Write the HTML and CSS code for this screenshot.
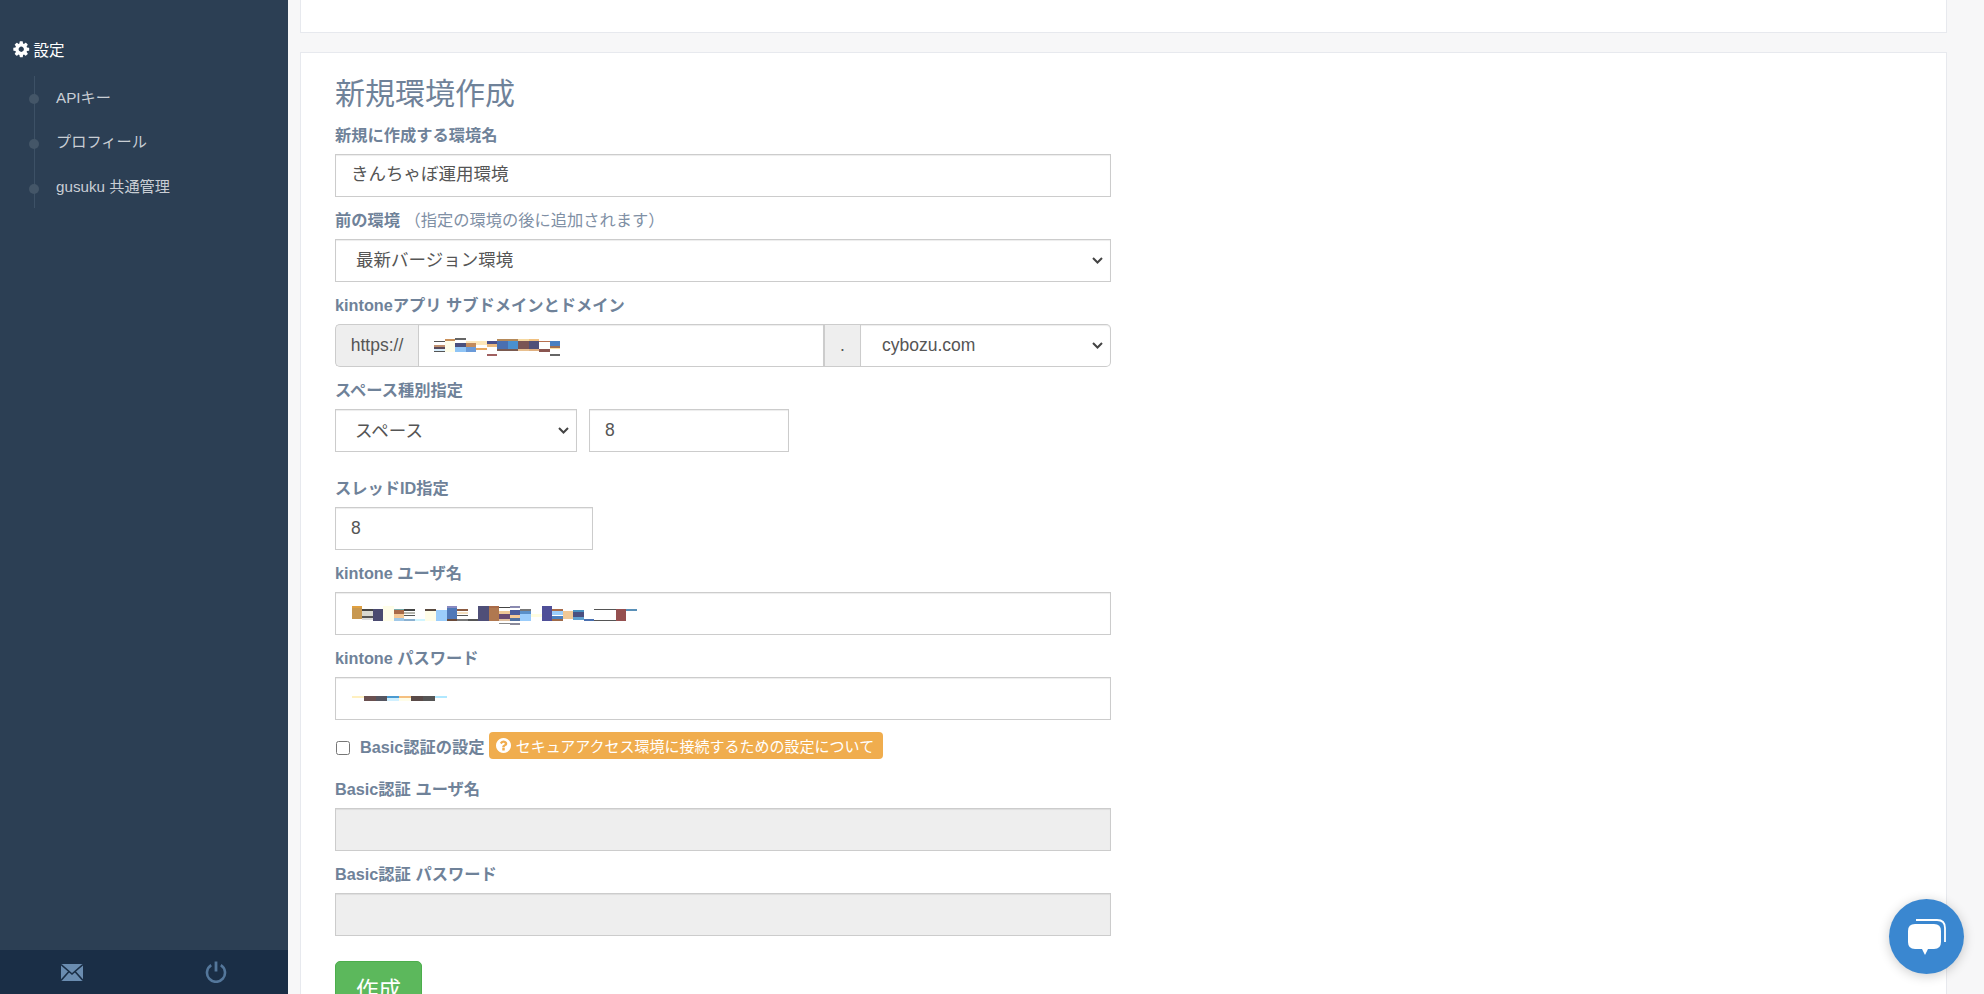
FILE: index.html
```html
<!DOCTYPE html>
<html lang="ja">
<head>
<meta charset="utf-8">
<title>新規環境作成</title>
<link rel="stylesheet" href="styles.css">
</head>
<body>
<aside class="sidebar">
  <nav class="side-nav">
    <div class="side-title">
      <svg class="gear" viewBox="0 0 1792 1792"><path fill="#fff" d="M1152 896q0-106-75-181t-181-75-181 75-75 181 75 181 181 75 181-75 75-181zm512-109v222q0 12-8 23t-20 13l-185 28q-19 54-39 91 35 50 107 138 10 12 10 25t-9 23q-27 37-99 108t-94 71q-12 0-26-9l-138-108q-44 23-91 38-16 136-29 186-7 28-36 28h-222q-14 0-24.500-8.500t-11.500-21.500l-28-184q-49-16-90-37l-141 107q-10 9-25 9-14 0-25-11-126-114-165-168-7-10-7-23 0-12 8-23 15-21 51-66.500t54-70.500q-27-50-41-99l-183-27q-13-2-21-12.500t-8-23.500v-222q0-12 8-23t19-13l186-28q14-46 39-92-40-57-107-138-10-12-10-24 0-10 9-23 26-36 98.500-107.500t94.500-71.500q13 0 26 10l138 107q44-23 91-38 16-136 29-186 7-28 36-28h222q14 0 24.500 8.500t11.500 21.500l28 184q49 16 90 37l142-107q9-9 24-9 13 0 25 10 129 119 165 170 7 8 7 22 0 12-8 23-15 21-51 66.500t-54 70.500q26 50 41 98l183 28q13 2 21 12.500t8 23.500z"/></svg>
      <span>設定</span>
    </div>
    <ul class="side-list">
      <li class="side-item side-item-first">APIキー</li>
      <li class="side-item">プロフィール</li>
      <li class="side-item">gusuku 共通管理</li>
    </ul>
  </nav>
  <div class="side-foot">
    <svg class="mail" viewBox="0 0 22 17"><rect width="22" height="17" fill="#6a8cb0"/><path d="M0 0.500L11 10L22 0.500M0 16.500L8 7.500M22 16.500L14 7.500" fill="none" stroke="#1a2e46" stroke-width="1.600"/></svg>
    <svg class="power" viewBox="0 0 22 22"><path d="M6.200 4.200A9 9 0 1 0 15.800 4.200" fill="none" stroke="#54779b" stroke-width="2.600"/><path d="M11 0.500V10.500" fill="none" stroke="#54779b" stroke-width="2.800"/></svg>
  </div>
</aside>

<main class="main">
  <section class="panel panel-top"></section>
  <section class="panel panel-form">
    <h1 class="title">新規環境作成</h1>

    <div class="group">
      <label class="label">新規に作成する環境名</label>
      <input class="control control-cjk" type="text" value="きんちゃぼ運用環境">
    </div>

    <div class="group">
      <label class="label">前の環境 <span class="hint">（指定の環境の後に追加されます）</span></label>
      <select class="control select"><option>最新バージョン環境</option></select>
    </div>

    <div class="group group-domain">
      <label class="label">kintoneアプリ サブドメインとドメイン</label>
      <div class="input-group">
        <span class="addon addon-first">https://</span>
        <div class="masked masked-sub">
          <input class="control control-flat" type="text">
          <svg class="mosaic mosaic-sub" viewBox="0 0 600 150" shape-rendering="crispEdges">
            <rect x="42" y="48" width="33" height="3" fill="#555"/><rect x="42" y="60" width="33" height="6" fill="#c09070"/><rect x="42" y="66" width="33" height="6" fill="#5b4a5a"/><rect x="42" y="72" width="33" height="6" fill="#d7eefc"/><rect x="42" y="78" width="33" height="3" fill="#555"/>
            <rect x="75" y="42" width="30" height="6" fill="#c9905a"/><rect x="75" y="48" width="30" height="33" fill="#fffde8"/>
            <rect x="105" y="39" width="33" height="6" fill="#666"/><rect x="105" y="54" width="33" height="12" fill="#4a4f7c"/><rect x="105" y="66" width="33" height="15" fill="#8fc4f5"/>
            <rect x="138" y="48" width="30" height="6" fill="#fce6bb"/><rect x="138" y="54" width="30" height="12" fill="#c28a5b"/><rect x="138" y="66" width="30" height="15" fill="#6a9ad8"/>
            <rect x="168" y="48" width="33" height="12" fill="#fde6b8"/><rect x="168" y="69" width="33" height="6" fill="#e8a860"/>
            <rect x="201" y="48" width="30" height="9" fill="#4a4f8c"/><rect x="201" y="57" width="30" height="9" fill="#e8b880"/><rect x="201" y="87" width="30" height="6" fill="#a06060"/>
            <rect x="231" y="42" width="33" height="6" fill="#b58a5a"/><rect x="231" y="48" width="33" height="24" fill="#4a6fb0"/><rect x="231" y="72" width="33" height="6" fill="#7a5a50"/>
            <rect x="264" y="42" width="30" height="6" fill="#b58a5a"/><rect x="264" y="48" width="30" height="24" fill="#4a90d0"/><rect x="264" y="72" width="30" height="6" fill="#7a5a50"/>
            <rect x="294" y="42" width="33" height="6" fill="#f5d8a0"/><rect x="294" y="48" width="33" height="24" fill="#7a5555"/><rect x="294" y="72" width="33" height="6" fill="#e8c090"/>
            <rect x="327" y="42" width="30" height="6" fill="#f0c080"/><rect x="327" y="48" width="30" height="24" fill="#4f5078"/><rect x="327" y="72" width="30" height="6" fill="#e0b080"/>
            <rect x="357" y="48" width="33" height="3" fill="#b87050"/><rect x="357" y="72" width="33" height="9" fill="#8a5550"/>
            <rect x="390" y="48" width="30" height="15" fill="#4a80c0"/><rect x="390" y="63" width="30" height="6" fill="#a07050"/><rect x="390" y="69" width="30" height="3" fill="#ffe0a0"/><rect x="390" y="87" width="30" height="6" fill="#666"/>
          </svg>
        </div>
        <span class="addon addon-dot">.</span>
        <select class="control select select-domain"><option>cybozu.com</option></select>
      </div>
    </div>

    <div class="group group-space">
      <label class="label">スペース種別指定</label>
      <div class="space-row">
        <select class="control select select-space"><option>スペース</option></select>
        <input class="control input-space" type="text" value="8">
      </div>
    </div>

    <div class="group">
      <label class="label">スレッドID指定</label>
      <input class="control input-thread" type="text" value="8">
    </div>

    <div class="group">
      <label class="label">kintone ユーザ名</label>
      <div class="masked">
        <input class="control" type="text">
        <svg class="mosaic mosaic-user" viewBox="0 0 960 150" shape-rendering="crispEdges">
          <rect x="36" y="48" width="30" height="6" fill="#e0a040"/><rect x="36" y="54" width="30" height="33" fill="#c89850"/>
          <rect x="66" y="57" width="33" height="6" fill="#444"/><rect x="66" y="63" width="33" height="15" fill="#d8d8d0"/><rect x="66" y="78" width="33" height="6" fill="#555"/><rect x="66" y="84" width="33" height="6" fill="#ddd"/>
          <rect x="99" y="57" width="30" height="36" fill="#4a4a70"/>
          <rect x="129" y="48" width="33" height="45" fill="#fffde8"/>
          <rect x="162" y="57" width="30" height="3" fill="#7aa"/><rect x="162" y="60" width="30" height="12" fill="#a86a48"/><rect x="162" y="72" width="30" height="12" fill="#f5c896"/><rect x="162" y="84" width="30" height="9" fill="#a0c8e8"/>
          <rect x="192" y="57" width="33" height="6" fill="#444"/><rect x="192" y="66" width="33" height="6" fill="#b8b8b0"/><rect x="192" y="75" width="33" height="3" fill="#555"/><rect x="192" y="87" width="33" height="6" fill="#8ab0d0"/>
          <rect x="225" y="87" width="30" height="6" fill="#d0f5ff"/>
          <rect x="255" y="57" width="33" height="6" fill="#5a4a40"/><rect x="255" y="63" width="33" height="30" fill="#fffde8"/>
          <rect x="288" y="60" width="33" height="33" fill="#9bcdfb"/>
          <rect x="321" y="48" width="30" height="6" fill="#8a8ac0"/><rect x="321" y="54" width="30" height="33" fill="#4f78b8"/><rect x="321" y="87" width="30" height="6" fill="#6a4a3a"/>
          <rect x="351" y="57" width="33" height="6" fill="#8a5a40"/><rect x="351" y="66" width="33" height="6" fill="#f5e0c0"/><rect x="351" y="75" width="33" height="3" fill="#555"/><rect x="351" y="87" width="33" height="6" fill="#777"/>
          <rect x="384" y="87" width="30" height="6" fill="#555"/>
          <rect x="414" y="48" width="33" height="45" fill="#4f4f78"/>
          <rect x="447" y="48" width="30" height="6" fill="#a86a48"/><rect x="447" y="54" width="30" height="39" fill="#b07850"/>
          <rect x="477" y="51" width="33" height="3" fill="#444"/><rect x="477" y="63" width="33" height="9" fill="#f0c896"/><rect x="477" y="72" width="33" height="15" fill="#6a4a70"/><rect x="477" y="87" width="33" height="6" fill="#e0c0a0"/><rect x="477" y="99" width="33" height="3" fill="#888"/>
          <rect x="510" y="48" width="30" height="6" fill="#8a8ab0"/><rect x="510" y="60" width="30" height="15" fill="#4a5a9a"/><rect x="510" y="75" width="30" height="9" fill="#f5c896"/><rect x="510" y="84" width="30" height="9" fill="#5070a0"/><rect x="510" y="99" width="30" height="6" fill="#8a8a9a"/>
          <rect x="540" y="57" width="33" height="6" fill="#777"/><rect x="540" y="63" width="33" height="9" fill="#5a90c8"/><rect x="540" y="72" width="33" height="21" fill="#9bcdfb"/>
          <rect x="573" y="72" width="33" height="9" fill="#fffde0"/>
          <rect x="606" y="48" width="30" height="45" fill="#4f4f98"/>
          <rect x="636" y="57" width="33" height="6" fill="#a86a48"/><rect x="636" y="63" width="33" height="12" fill="#9bcdfb"/><rect x="636" y="78" width="33" height="9" fill="#4a80c0"/><rect x="636" y="87" width="33" height="6" fill="#a06a48"/>
          <rect x="669" y="63" width="30" height="24" fill="#f0c896"/>
          <rect x="699" y="60" width="33" height="6" fill="#4a90c0"/><rect x="699" y="66" width="33" height="15" fill="#4a4f80"/><rect x="699" y="81" width="33" height="9" fill="#60a0d0"/>
          <rect x="732" y="87" width="30" height="6" fill="#4a70b0"/>
          <rect x="762" y="57" width="66" height="3" fill="#555"/><rect x="762" y="90" width="66" height="3" fill="#555"/>
          <rect x="828" y="57" width="30" height="36" fill="#955050"/>
          <rect x="858" y="57" width="33" height="6" fill="#5a90b8"/>
        </svg>
      </div>
    </div>

    <div class="group">
      <label class="label">kintone パスワード</label>
      <div class="masked">
        <input class="control" type="text">
        <svg class="mosaic mosaic-pass" viewBox="0 0 360 30" shape-rendering="crispEdges">
          <rect x="36" y="12" width="36" height="7" fill="#fff0c0"/>
          <rect x="72" y="12" width="36" height="14" fill="#6a5050"/>
          <rect x="108" y="12" width="33" height="14" fill="#555560"/>
          <rect x="141" y="12" width="36" height="7" fill="#4a9ad0"/><rect x="141" y="19" width="36" height="7" fill="#d0f0ff"/>
          <rect x="177" y="12" width="36" height="7" fill="#f5c080"/><rect x="177" y="19" width="36" height="7" fill="#fffde8"/>
          <rect x="213" y="12" width="36" height="14" fill="#5a4a48"/>
          <rect x="249" y="12" width="36" height="14" fill="#555"/>
          <rect x="285" y="12" width="36" height="7" fill="#b0e8ff"/>
        </svg>
      </div>
    </div>

    <div class="check-row">
      <input class="check" type="checkbox">
      <span class="check-label">Basic認証の設定</span>
      <span class="badge">
        <svg class="badge-icon" viewBox="128 128 1536 1536"><path fill="#fff" d="M1024 1376v-192q0-14-9-23t-23-9h-192q-14 0-23 9t-9 23v192q0 14 9 23t23 9h192q14 0 23-9t9-23zm256-672q0-88-55.500-163t-138.500-116-170-41q-243 0-371 213-15 24 8 42l132 100q7 6 19 6 16 0 25-12 53-68 86-92 34-24 86-24 48 0 85.500 26t37.500 59q0 38-20 61t-68 45q-63 28-115.500 86.500t-52.500 125.500v36q0 14 9 23t23 9h192q14 0 23-9t9-23q0-19 21.500-49.500t54.500-49.500q32-18 49-28.500t46-35 44.500-48 28-60.500 12.500-81zm384 192q0 209-103 385.500t-279.500 279.500-385.500 103-385.500-103-279.500-279.500-103-385.500 103-385.500 279.500-279.500 385.500-103 385.500 103 279.500 279.500 103 385.500z"/></svg>
        セキュアアクセス環境に接続するための設定について
      </span>
    </div>

    <div class="group">
      <label class="label">Basic認証 ユーザ名</label>
      <input class="control" type="text" disabled>
    </div>

    <div class="group">
      <label class="label">Basic認証 パスワード</label>
      <input class="control" type="text" disabled>
    </div>

    <button class="submit" type="button">作成</button>
  </section>
</main>

<div class="chat">
  <svg class="chat-icon" viewBox="0 0 38 36">
    <path d="M8 1H29Q37 1 37 9V23" fill="none" stroke="#fff" stroke-width="1.800"/>
    <path d="M7 5H26Q33 5 33 12V23Q33 30 26 30H20L17 36L14 30H7Q0 30 0 23V12Q0 5 7 5Z" fill="#fff"/>
  </svg>
</div>
</body>
</html>
```
FILE: styles.css
```css
* { box-sizing: border-box; }
html, body { margin: 0; height: 994px; overflow: hidden; }
body {
  display: flex;
  background: #f7f7f8;
  font-family: "Liberation Sans", "Noto Sans CJK JP", sans-serif;
  color: #555;
}

/* Sidebar */
.sidebar {
  width: 288px;
  height: 994px;
  flex: none;
  display: flex;
  flex-direction: column;
  background: #2c3f54;
}
.side-nav { flex: 1; padding: 37px 0 0 12px; }
.side-title { display: flex; align-items: center; gap: 3px; height: 24px; color: #fff; font-size: 15.500px; }
.gear { width: 18.500px; height: 18.500px; flex: none; }
.side-list {
  list-style: none;
  margin: 15px 0 0 22px;
  padding: 0;
  height: 132px;
  border-left: 1px solid #3d5166;
}
.side-item {
  position: relative;
  height: 45px;
  padding: 11px 0 0 21px;
  font-size: 15.200px;
  line-height: 20px;
  color: #c9ced4;
}
.side-item-first { padding-top: 12px; }
.side-item::before {
  content: "";
  position: absolute;
  left: -6px;
  top: 18px;
  width: 10px;
  height: 10px;
  border-radius: 50%;
  background: #445668;
}
.side-foot {
  height: 44px;
  flex: none;
  background: #1a2e46;
  display: flex;
  align-items: center;
  padding-left: 61px;
  gap: 122px;
}
.mail { width: 22px; height: 17px; }
.power { width: 22px; height: 22px; }

/* Main */
.main {
  flex: 1;
  height: 994px;
  overflow: hidden;
  padding: 0 37px 0 12px;
}
.panel { background: #fff; border: 1px solid #e7e9ee; }
.panel-top { height: 33px; border-top: 0; margin-bottom: 19px; }
.panel-form { padding: 23px 34px 40px 34px; }
.title {
  margin: 0 0 11px;
  font-size: 30px;
  line-height: 36px;
  font-weight: 400;
  color: #6f8299;
}

/* Form */
.group { margin-bottom: 11.500px; width: 776px; }
.group-domain { margin-bottom: 11px; }
.group-space { margin-bottom: 24px; }
.label {
  display: block;
  height: 24px;
  margin-bottom: 7px;
  font-size: 16.250px;
  line-height: 24px;
  font-weight: 700;
  color: #6f8299;
}
.hint { font-size: 16.250px; font-weight: 400; color: #7f90a5; }
.control {
  display: block;
  width: 100%;
  height: 42.500px;
  padding: 0 15px;
  border: 1px solid #ccc;
  border-radius: 0;
  background: #fff;
  box-shadow: inset 0 1px 1px rgba(0, 0, 0, .075);
  font: inherit;
  font-size: 17.500px;
  color: #555;
}
.control-cjk { padding-bottom: 5px; }
.control:disabled { background: #eee; }
.select {
  appearance: none;
  padding: 0 26px 0 20px;
  background: #fff url("data:image/svg+xml,%3Csvg xmlns='http://www.w3.org/2000/svg' width='11' height='7'%3E%3Cpath d='M1 1l4.500 4.500L10 1' fill='none' stroke='%23444' stroke-width='2'/%3E%3C/svg%3E") no-repeat right 7px center;
}
.input-group { display: flex; height: 43px; }
.addon {
  flex: none;
  height: 43px;
  display: flex;
  align-items: center;
  justify-content: center;
  background: #eee;
  border: 1px solid #ccc;
  font-size: 17.500px;
  color: #555;
}
.addon-first { width: 83px; border-right: 0; border-radius: 5px 0 0 5px; }
.addon-dot { width: 38px; border-width: 1px 1px 1px 2px; }
.masked { position: relative; }
.masked-sub { flex: 1; }
.masked-sub .control { height: 43px; border-right: 0; }
.select-domain { flex: none; width: 250px; height: 43px; border-left: 0; border-radius: 0 5px 5px 0; padding: 0 26px 2px 21px; }
.mosaic { position: absolute; display: block; }
.mosaic-sub { left: 2px; top: 1px; width: 200px; height: 50px; }
.mosaic-user { left: 5px; top: -2px; width: 320px; height: 50px; }
.mosaic-pass { left: 5px; top: 15px; width: 120px; height: 10px; }
.space-row { display: flex; gap: 12px; }
.select-space { flex: none; width: 242px; height: 43px; padding-left: 19px; }
.input-space { flex: none; width: 200px; height: 43px; }
.input-thread { width: 258px; }

.check-row { display: flex; align-items: flex-start; height: 46px; }
.check { width: 14px; height: 14px; margin: 10px 10px 0 1px; flex: none; }
.check-label {
  margin-top: 4px;
  font-size: 16.250px;
  line-height: 24px;
  font-weight: 700;
  color: #6f8299;
}
.badge {
  display: inline-flex;
  align-items: center;
  gap: 5px;
  height: 27px;
  margin: 1px 0 0 4px;
  padding: 0 9px 0 7px;
  border-radius: 4px;
  background: #f0ad4e;
  color: #fff;
  font-size: 15px;
  white-space: nowrap;
}
.badge-icon { width: 15px; height: 15px; flex: none; }
.submit {
  display: block;
  width: 87px;
  height: 54px;
  margin-top: 25px;
  border: 1px solid #4cae4c;
  border-radius: 5px;
  background: #5cb85c;
  color: #fff;
  font: inherit;
  font-size: 22.500px;
}

/* Chat launcher */
.chat {
  position: absolute;
  left: 1889px;
  top: 899px;
  width: 75px;
  height: 75px;
  border-radius: 50%;
  background: #3a87d0;
  box-shadow: 0 2px 12px rgba(0, 0, 0, .2);
  display: flex;
  align-items: center;
  justify-content: center;
}
.chat-icon { width: 38px; height: 36px; margin-top: 1px; }
```
